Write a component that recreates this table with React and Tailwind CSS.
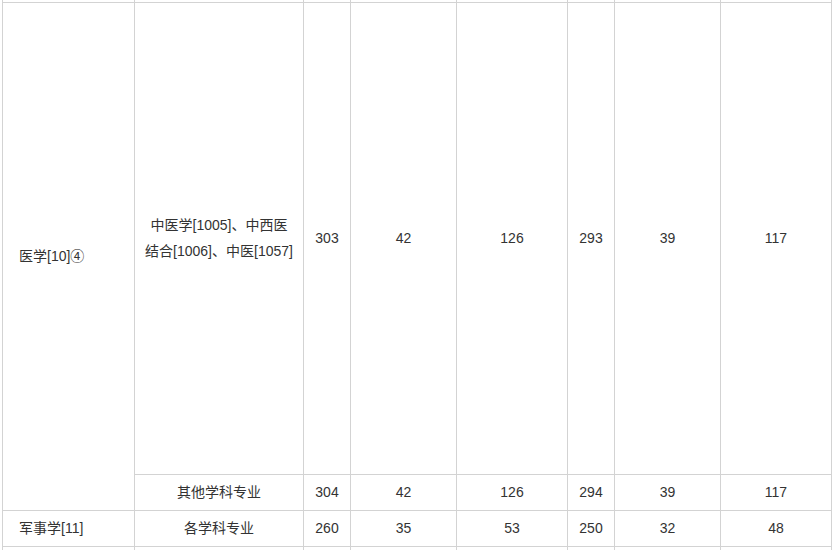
import React from 'react'

const cols = [132, 169, 47, 106, 111, 47, 106, 111]

const rows = [
  { major: '其他学科专业', v: ['304', '42', '126', '294', '39', '117'] },
]

const cell = 'border border-[#d3d3d3] text-center align-middle p-0'

export default function App() {
  return (
    <div
      className="h-[550px] w-[834px] overflow-hidden bg-white pl-[2px] text-[14px] text-[#333]"
      style={{ fontFamily: '"Liberation Sans", Arial, "Noto Sans CJK SC", sans-serif' }}
    >
      <table className="-mt-[20px] table-fixed border-collapse" style={{ width: 830 }}>
        <colgroup>
          {cols.map((w, i) => (
            <col key={i} style={{ width: w }} />
          ))}
        </colgroup>
        <tbody>
          <tr className="h-[22px]">
            {cols.map((_, i) => (
              <td key={i} className="border-x border-[#d3d3d3] p-0" />
            ))}
          </tr>
          <tr className="h-[472px]">
            <td rowSpan={2} className={`${cell} !text-left pl-4`}>医学[10]④</td>
            <td className={`${cell} leading-[26px]`}>
              中医学[1005]、中西医
              <br />
              结合[1006]、中医[1057]
            </td>
            {['303', '42', '126', '293', '39', '117'].map((v, i) => (
              <td key={i} className={cell}>{v}</td>
            ))}
          </tr>
          {rows.map((r) => (
            <tr key={r.major} className="h-[36px]">
              <td className={cell}>{r.major}</td>
              {r.v.map((v, i) => (
                <td key={i} className={cell}>{v}</td>
              ))}
            </tr>
          ))}
          <tr className="h-[36px]">
            <td className={`${cell} !text-left pl-4`}>军事学[11]</td>
            <td className={cell}>各学科专业</td>
            {['260', '35', '53', '250', '32', '48'].map((v, i) => (
              <td key={i} className={cell}>{v}</td>
            ))}
          </tr>
          <tr className="h-[36px]">
            {cols.map((_, i) => (
              <td key={i} className={cell} />
            ))}
          </tr>
        </tbody>
      </table>
    </div>
  )
}
